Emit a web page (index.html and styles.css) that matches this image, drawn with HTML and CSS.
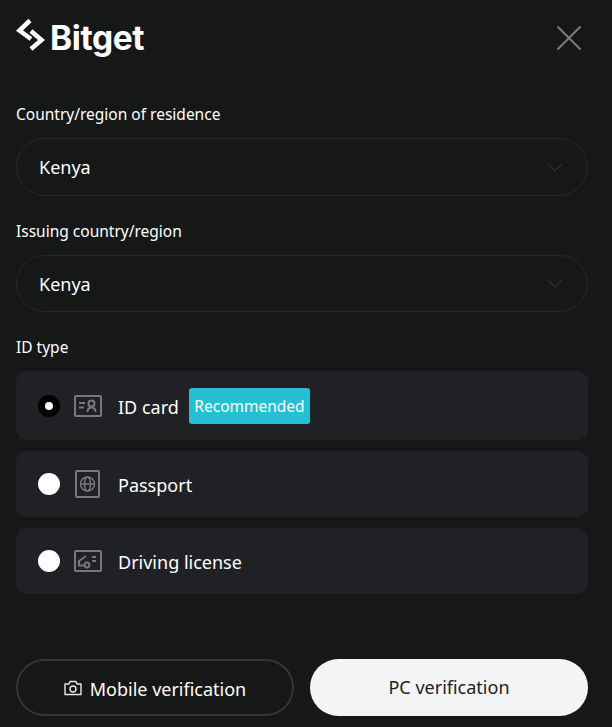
FILE: index.html
```html
<!DOCTYPE html>
<html lang="en">
<head>
    <meta charset="UTF-8">
    <meta name="viewport" content="width=device-width, initial-scale=1.0">
    <title>Identity verification</title>
    <link rel="stylesheet" href="styles.css">
</head>
<body>
    <div class="container">
        <div class="header">
            <div class="logo">
                <svg class="logo-mark" width="32" height="34" viewBox="0 0 32 34" fill="none" stroke="#fff" stroke-width="4.5">
                    <path d="M14 2.500L3.500 12.500L15 21"/>
                    <path d="M15 13L25.500 22L15 31"/>
                </svg>
                <span class="logo-text">Bitget</span>
            </div>
            <svg class="close" width="26" height="26" viewBox="0 0 26 26" fill="none">
                <path d="M1.500 1.500L24.500 24.500M24.500 1.500L1.500 24.500" stroke="#7b7c7d" stroke-width="2"/>
            </svg>
        </div>

        <div class="field-label">Country/region of residence</div>
        <div class="select">
            <span>Kenya</span>
            <svg width="16" height="9" viewBox="0 0 16 9" fill="none"><path d="M1 1L8 8L15 1" stroke="#2b2e30" stroke-width="1.400"/></svg>
        </div>

        <div class="field-label">Issuing country/region</div>
        <div class="select select-last">
            <span>Kenya</span>
            <svg width="16" height="9" viewBox="0 0 16 9" fill="none"><path d="M1 1L8 8L15 1" stroke="#2b2e30" stroke-width="1.400"/></svg>
        </div>

        <div class="field-label">ID type</div>
        <div class="id-list">
            <div class="id-row id-row-first">
                <span class="radio radio-on"></span>
                <svg class="id-icon" width="28" height="22" viewBox="0 0 28 22" fill="none" stroke="#77787a" stroke-width="2">
                    <rect x="1" y="1" width="26" height="20" rx="1"/>
                    <path d="M5 8H11M5 12.500H10"/>
                    <circle cx="17.500" cy="8.500" r="3"/>
                    <path d="M13.500 17C13.500 14 15 12.500 17.500 12.500C20 12.500 21.500 14 21.500 17"/>
                </svg>
                <span class="id-name">ID card</span>
                <span class="badge">Recommended</span>
            </div>
            <div class="id-row">
                <span class="radio"></span>
                <svg class="id-icon" width="28" height="28" viewBox="0 0 28 28" fill="none" stroke="#77787a" stroke-width="2">
                    <rect x="2" y="1" width="23" height="26" rx="1"/>
                    <g stroke-width="1.500">
                        <circle cx="13.500" cy="14" r="7"/>
                        <ellipse cx="13.500" cy="14" rx="3" ry="7"/>
                        <path d="M6.500 14H20.500"/>
                    </g>
                </svg>
                <span class="id-name">Passport</span>
            </div>
            <div class="id-row">
                <span class="radio"></span>
                <svg class="id-icon" width="28" height="22" viewBox="0 0 28 22" fill="none" stroke="#77787a" stroke-width="2">
                    <rect x="1" y="1" width="26" height="20" rx="1"/>
                    <path d="M12 6L5 11V15.500H10"/>
                    <circle cx="13" cy="15" r="2.400"/>
                    <path d="M18 7H22M18 11H22"/>
                </svg>
                <span class="id-name">Driving license</span>
            </div>
        </div>

        <div class="actions">
            <button class="btn btn-outline">
                <svg width="18" height="16" viewBox="0 0 18 16" fill="none" stroke="#e8e8e8" stroke-width="1.400">
                    <path d="M1 4H5L6 1.500H12L13 4H17V14.500H1Z" stroke-linejoin="round"/>
                    <circle cx="9" cy="9" r="3"/>
                </svg>
                <span class="btn-label">Mobile verification</span>
            </button>
            <button class="btn btn-light">PC verification</button>
        </div>
    </div>
</body>
</html>
```

FILE: styles.css
```css
:root {
    --background: #151817;
    --row-bg: #1f2125;
    --text-color: #ffffff;
    --border-color: #26292b;
    --accent: #25bfd4;
}

html, body {
    height: 100%;
}

body {
    font-family: "Noto Sans", "Open Sans", sans-serif;
    background-color: var(--background);
    color: var(--text-color);
    margin: 0;
}

.container {
    padding: 0 24px 11px 16px;
    height: 100%;
    box-sizing: border-box;
    display: flex;
    flex-direction: column;
}

.header {
    display: flex;
    justify-content: space-between;
    align-items: flex-start;
    height: 102px;
}

.logo {
    display: flex;
    align-items: flex-start;
    padding-top: 18px;
    color: #fff;
}

.logo-mark {
    margin-right: 2px;
}

.logo-text {
    font-family: Inter, Roboto, sans-serif;
    font-size: 33.5px;
    font-weight: 700;
    line-height: 40px;
    letter-spacing: -0.4px;
}

.close {
    margin-top: 25px;
    margin-right: 6px;
}

.field-label {
    font-size: 15.5px;
    line-height: 24px;
    margin-bottom: 12px;
}

.select {
    height: 56px;
    border: 1px solid var(--border-color);
    border-radius: 29px;
    display: flex;
    align-items: center;
    justify-content: space-between;
    padding: 0 24px 0 22px;
    margin-bottom: 23px;
    font-size: 18px;
}

.select-last {
    height: 55px;
}

.id-list {
    display: flex;
    flex-direction: column;
    gap: 11px;
}

.id-row {
    height: 66px;
    background-color: var(--row-bg);
    border-radius: 10px;
    display: flex;
    align-items: center;
    padding-left: 22px;
    font-size: 18px;
}

.id-row-first {
    height: 69px;
}

.radio {
    width: 22px;
    height: 22px;
    background-color: #fff;
    border-radius: 50%;
    box-sizing: border-box;
    flex: none;
}

.radio-on {
    border: 7px solid #000;
}

.id-icon {
    width: 28px;
    margin-left: 14px;
    flex: none;
}

.id-name {
    margin-left: 16px;
    padding-top: 2px;
}

.badge {
    margin-left: 10px;
    background-color: var(--accent);
    color: #fff;
    font-size: 15.5px;
    height: 36px;
    line-height: 36px;
    padding: 0 5.5px;
    border-radius: 3px;
}

.actions {
    margin-top: auto;
    display: grid;
    grid-template-columns: 278px 278px;
    gap: 16px;
}

.btn {
    height: 57px;
    border-radius: 29px;
    font-family: inherit;
    font-size: 18px;
    display: flex;
    align-items: center;
    justify-content: center;
    gap: 8px;
}

.btn-label {
    padding-top: 2px;
}

.btn-outline {
    background: none;
    border: 2px solid #333537;
    color: var(--text-color);
}

.btn-light {
    background-color: #f3f4f6;
    border: none;
    color: #1f2125;
    padding-bottom: 2px;
}
```
